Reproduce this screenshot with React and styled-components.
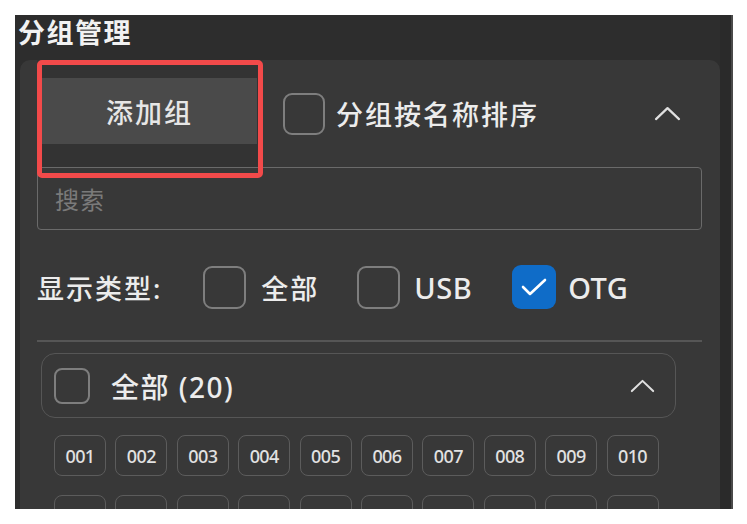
import React from "react";
import styled, { createGlobalStyle } from "styled-components";

const Global = createGlobalStyle`
  html, body { margin: 0; padding: 0; background: #ffffff; }
  body { font-family: "Noto Sans", "Noto Sans CJK SC", sans-serif; }
  * { box-sizing: border-box; }
`;

const Panel = styled.div`
  margin: 15px 0 0 15px;
  width: 718px;
  height: 494px;
  background: #2d2d2d;
  display: flex;
  overflow: hidden;
`;

const Main = styled.div`
  flex: 1;
  display: flex;
  flex-direction: column;
  min-width: 0;
`;

const ScrollStrip = styled.div`
  width: 13px;
  flex: none;
  background: #2a2a2a;
  border-right: 2px solid #4a4a4a;
`;

const Title = styled.div`
  flex: none;
  height: 45px;
  padding: 3px 0 0 3px;
  font-size: 27px;
  font-weight: 700;
  color: #f2f2f2;
  line-height: 30px;
  letter-spacing: 1.5px;
`;

const Card = styled.div`
  margin-left: 5px;
  flex: 1;
  min-height: 0;
  background: #383838;
  border-radius: 10px 10px 0 0;
  display: flex;
  flex-direction: column;
  position: relative;
`;

const TopRow = styled.div`
  flex: none;
  height: 107px;
  display: flex;
  align-items: center;
  padding: 0 39px 0 17px;
`;

const AddButton = styled.button`
  position: relative;
  align-self: stretch;
  width: 225px;
  margin-right: 21px;
  border: none;
  padding: 18px 5px 23px;
  background: #333333;
  font: inherit;
  display: flex;
  z-index: 2;
`;

const AddButtonFace = styled.span`
  flex: 1;
  background: #4a4a4a;
  color: #e6e6e6;
  font-size: 27px;
  font-weight: 500;
  letter-spacing: 2px;
  display: flex;
  align-items: center;
  justify-content: center;
`;

const RedMark = styled.span`
  position: absolute;
  left: 0;
  top: 0;
  width: 226px;
  height: 118px;
  border: 5px solid #f24a4a;
  border-radius: 5px;
  pointer-events: none;
  z-index: 3;
`;

const Box = styled.span`
  width: ${(p) => p.$size}px;
  height: ${(p) => p.$size}px;
  flex: none;
  border-radius: ${(p) => (p.$size > 40 ? 9 : 8)}px;
  border: ${(p) => (p.$checked ? "none" : "2px solid #7e7e7e")};
  background: ${(p) => (p.$checked ? "#0f6cc8" : "transparent")};
  display: flex;
  align-items: center;
  justify-content: center;
`;

const Label = styled.span`
  font-size: ${(p) => (p.$latin ? 29 : 27)}px;
  font-weight: 500;
  color: #ececec;
  letter-spacing: ${(p) => (p.$latin ? 0.5 : 2)}px;
  white-space: nowrap;
`;

const SortOption = styled.label`
  display: flex;
  align-items: center;
  gap: 11px;
  flex: 1;
`;

const Chevron = ({ w = 27 }) => (
  <svg width={w} height={w * 0.6} viewBox="0 0 27 16" fill="none">
    <polyline
      points="2,14 13.5,3 25,14"
      stroke="#e0e0e0"
      strokeWidth="2.2"
      strokeLinecap="round"
      strokeLinejoin="round"
    />
  </svg>
);

const Check = () => (
  <svg width="30" height="24" viewBox="0 0 30 24" fill="none">
    <polyline
      points="4,12 11,19 26,5"
      stroke="#ffffff"
      strokeWidth="2.6"
      strokeLinecap="round"
      strokeLinejoin="round"
    />
  </svg>
);

const Search = styled.div`
  flex: none;
  margin: 0 18px 0 17px;
  height: 63px;
  border: 1.5px solid #6a6a6a;
  border-radius: 4px;
  display: flex;
  align-items: center;
  padding-left: 17px;
  font-size: 24px;
  color: #7a7a7a;
  letter-spacing: 1px;
`;

const TypeRow = styled.div`
  flex: none;
  margin: 34px 0 0 17px;
  height: 46px;
  display: flex;
  align-items: center;
`;

const TypeLabel = styled(Label)`
  margin-right: 41px;
`;

const TypeOption = styled.label`
  display: flex;
  align-items: center;
  gap: ${(p) => p.$gap}px;
  margin-right: ${(p) => p.$after}px;
`;

const Divider = styled.div`
  flex: none;
  margin: 30px 18px 0 17px;
  height: 2px;
  background: #565656;
`;

const GroupHeader = styled.div`
  flex: none;
  margin: 11px 0 0 21px;
  width: 635px;
  height: 65px;
  border: 1.5px solid #565656;
  border-radius: 14px;
  display: flex;
  align-items: center;
  padding: 0 20px 0 12px;
  gap: 21px;
`;

const GroupTitle = styled(Label)`
  flex: 1;
  font-size: 28px;
  letter-spacing: 1.5px;
`;

const Chips = styled.div`
  flex: none;
  margin: 17px 0 0 34px;
  display: grid;
  grid-template-columns: repeat(10, 52px);
  column-gap: 9.4px;
  row-gap: 19px;
`;

const Chip = styled.div`
  height: 41px;
  border: 1.5px solid #5c5c5c;
  border-radius: 8px;
  display: flex;
  align-items: center;
  justify-content: center;
  font-size: 18px;
  font-weight: 500;
  color: #e2e2e2;
  letter-spacing: -0.6px;
`;

const chips = Array.from({ length: 20 }, (_, i) => String(i + 1).padStart(3, "0"));

export default function App() {
  return (
    <>
      <Global />
      <Panel>
        <Main>
          <Title>分组管理</Title>
          <Card>
            <TopRow>
              <AddButton>
                <AddButtonFace>添加组</AddButtonFace>
                <RedMark />
              </AddButton>
              <SortOption>
                <Box $size={42} />
                <Label>分组按名称排序</Label>
              </SortOption>
              <Chevron />
            </TopRow>
            <Search>搜索</Search>
            <TypeRow>
              <TypeLabel>显示类型:</TypeLabel>
              <TypeOption $gap={15} $after={38}>
                <Box $size={43} />
                <Label>全部</Label>
              </TypeOption>
              <TypeOption $gap={14} $after={40}>
                <Box $size={43} />
                <Label $latin>USB</Label>
              </TypeOption>
              <TypeOption $gap={12} $after={0}>
                <Box $size={44} $checked>
                  <Check />
                </Box>
                <Label $latin>OTG</Label>
              </TypeOption>
            </TypeRow>
            <Divider />
            <GroupHeader>
              <Box $size={36} />
              <GroupTitle>全部 (20)</GroupTitle>
              <Chevron w={25} />
            </GroupHeader>
            <Chips>
              {chips.map((c) => (
                <Chip key={c}>{c}</Chip>
              ))}
            </Chips>
          </Card>
        </Main>
        <ScrollStrip />
      </Panel>
    </>
  );
}
